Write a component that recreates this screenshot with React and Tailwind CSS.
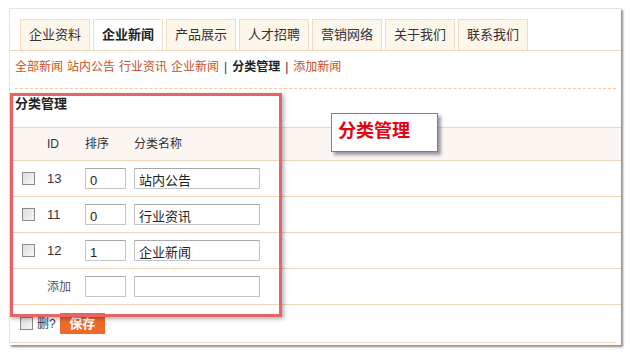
const tabs = ["企业资料", "企业新闻", "产品展示", "人才招聘", "营销网络", "关于我们", "联系我们"];

const rows = [
  { id: "13", sort: "0", name: "站内公告" },
  { id: "11", sort: "0", name: "行业资讯" },
  { id: "12", sort: "1", name: "企业新闻" },
];

function Check() {
  return (
    <span className="block w-[13px] h-[13px] border border-[#8a8a8a] bg-gradient-to-br from-[#dcdcdc] to-[#f8f8f8]"></span>
  );
}

function Box({ value, wide }) {
  return (
    <div
      className={
        (wide ? "w-[126px]" : "w-[41px]") +
        " h-[21px] border border-[#c4c4c4] border-t-[#a8a8a8] bg-white px-[4px] pt-[4px] text-[13px] leading-[16px] text-[#222]"
      }
    >
      {value}
    </div>
  );
}

function App() {
  return (
    <div
      className="w-[630px] h-[355px] bg-white pt-[8px] pl-[9px]"
      style={{ fontFamily: '"Liberation Sans", "Noto Sans CJK SC", sans-serif' }}
    >
      <div className="relative w-[612px] h-[337px] bg-white border-l border-t border-[#e2e2e2] shadow-[2px_2px_2px_rgba(0,0,0,0.45)]">
        {/* tabs */}
        <div className="flex gap-[3px] pl-[10px] pt-[10px] border-b border-[#efd6bb]">
          {tabs.map((t, i) => (
            <div
              key={t}
              className={
                "w-[70px] h-[31px] flex items-center justify-center text-[13px] border border-b-0 border-[#f1dcc2] " +
                (i === 1 ? "bg-white font-bold text-[#222]" : "bg-[#fdf6ea] text-[#333]")
              }
            >
              {t}
            </div>
          ))}
        </div>

        {/* sub links */}
        <div className="pl-[5px] pt-[7px] h-[37px] text-[12px] text-[#c4501e] flex gap-[4px]">
          <span>全部新闻</span>
          <span>站内公告</span>
          <span>行业资讯</span>
          <span>企业新闻</span>
          <span className="text-[#333] mx-[1px]">|</span>
          <span className="font-bold text-[#222]">分类管理</span>
          <span className="text-[#333] mx-[1px]">|</span>
          <span>添加新闻</span>
        </div>
        <div className="mx-[5px] border-t border-dashed border-[#f2c9a2]"></div>

        <div className="pl-[5px] pt-[5px] h-[38px] text-[13px] font-bold text-[#222]">分类管理</div>

        {/* table */}
        <div className="text-[12px] text-[#333]">
          <div className="h-[34px] flex items-center bg-[#fbf6f2] border-t border-b border-[#f1d5bb]">
            <span className="ml-[37px] w-[38px]">ID</span>
            <span className="w-[49px]">排序</span>
            <span>分类名称</span>
          </div>
          {rows.map((r) => (
            <div key={r.id} className="h-[36px] flex items-center border-b border-[#f1d5bb]">
              <span className="ml-[12px] w-[25px]">
                <Check />
              </span>
              <span className="w-[38px] text-[13px]">{r.id}</span>
              <span className="w-[49px]">
                <Box value={r.sort} />
              </span>
              <Box value={r.name} wide />
            </div>
          ))}
          <div className="h-[36px] flex items-center border-b border-[#f1d5bb]">
            <span className="ml-[37px] w-[38px] text-[#555]">添加</span>
            <span className="w-[49px]">
              <Box value="" />
            </span>
            <Box value="" wide />
          </div>
        </div>

        <div className="h-[38px] flex items-center pl-[10px] border-b border-[#f3d8bf] mx-[5px] -ml-0">
          <Check />
          <span className="ml-[4px] text-[12px] text-[#333]">删?</span>
          <span className="ml-[4px] w-[45px] h-[21px] bg-[#ee6a2b] text-white text-[13px] font-bold flex items-center justify-center">
            保存
          </span>
        </div>

        {/* annotation overlays */}
        <div className="absolute left-0 top-[84px] w-[272px] h-[224px] border-[3px] border-[#e86464] shadow-[2px_2px_4px_rgba(0,0,0,0.3)]"></div>
        <div className="absolute left-[321px] top-[104px] w-[107px] h-[39px] bg-white border border-[#7b7b9c] shadow-[3px_3px_3px_rgba(60,60,90,0.5)] pl-[6px] pt-[5px] text-[18px] font-bold text-[#e60012] leading-[24px]">
          分类管理
        </div>
      </div>
    </div>
  );
}

export default App;
